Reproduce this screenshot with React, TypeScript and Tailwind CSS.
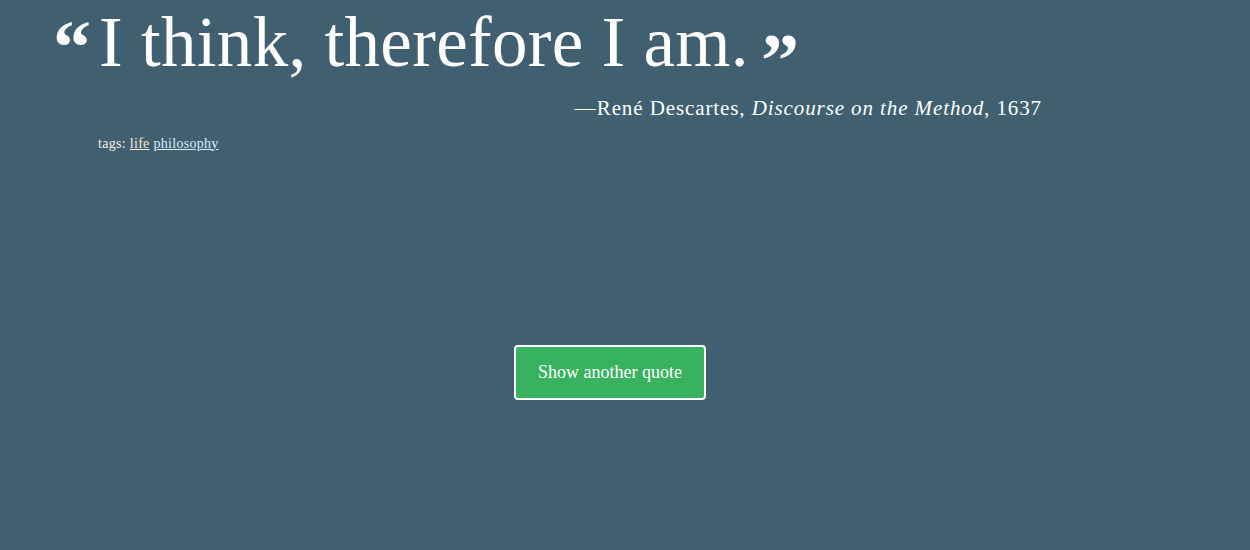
const serif = { fontFamily: '"Liberation Serif", "DejaVu Serif", serif' };

export default function App() {
  return (
    <div
      className="w-full h-[550px] bg-[#405f70] text-white overflow-hidden"
      style={serif}
    >
      <div className="w-[1220px]">
        {/* Quote */}
        <div className="flex items-start h-[84px] pl-[53px]">
          <span className="text-[76px] font-bold leading-[48px] mt-[23px] mr-[8px]">
            &ldquo;
          </span>
          <h1 className="text-[71px] leading-[84px] font-normal tracking-[0.3px]">
            I think, therefore I am.
          </h1>
          <span className="text-[76px] font-bold leading-[48px] mt-[36px] ml-[12px]">
            &rdquo;
          </span>
        </div>

        {/* Author */}
        <div className="flex justify-end pr-[178px] mt-[9px]">
          <p className="text-[21px] tracking-[0.9px]">
            &mdash;René Descartes, <em>Discourse on the Method</em>, 1637
          </p>
        </div>

        {/* Tags */}
        <div className="pl-[98px] mt-[8px] text-[14px] tracking-[0.3px]">
          <span className="text-[#f3ece2]">tags: </span>
          <a href="#" className="underline text-[#fbe9d6]">
            life
          </a>{" "}
          <a href="#" className="underline text-[#d8ecfb]">
            philosophy
          </a>
        </div>

        {/* Button */}
        <div className="flex justify-center mt-[191px]">
          <button className="w-[192px] h-[55px] bg-[#39b260] border-2 border-white rounded-[4px] text-[18px] text-white">
            Show another quote
          </button>
        </div>
      </div>
    </div>
  );
}
